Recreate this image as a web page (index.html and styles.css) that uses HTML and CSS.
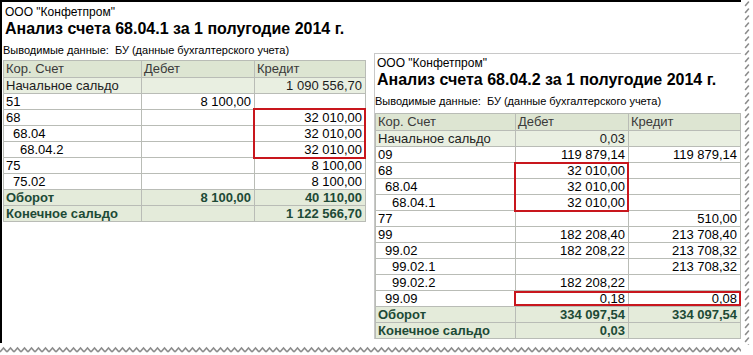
FILE: index.html
```html
<!DOCTYPE html>
<html lang="ru">
<head>
<meta charset="utf-8">
<title>Анализ счета</title>
<link rel="stylesheet" href="styles.css">
</head>
<body>
<div class="frame">
  <div class="sheet">
    <section class="report report-left">
      <div class="org">ООО "Конфетпром"</div>
      <h1 class="title">Анализ счета 68.04.1 за 1 полугодие 2014 г.</h1>
      <div class="meta">Выводимые данные:&nbsp; БУ (данные бухгалтерского учета)</div>
      <div class="table-wrap">
        <table class="grid grid-left">
          <colgroup><col class="c1"><col class="c2"><col class="c3"></colgroup>
          <tr class="head"><td>Кор. Счет</td><td>Дебет</td><td>Кредит</td></tr>
          <tr class="saldo"><td>Начальное сальдо</td><td></td><td class="num">1 090 556,70</td></tr>
          <tr><td>51</td><td class="num">8 100,00</td><td></td></tr>
          <tr><td>68</td><td></td><td class="num">32 010,00</td></tr>
          <tr><td class="l1">68.04</td><td></td><td class="num">32 010,00</td></tr>
          <tr><td class="l2">68.04.2</td><td></td><td class="num">32 010,00</td></tr>
          <tr><td>75</td><td></td><td class="num">8 100,00</td></tr>
          <tr><td class="l1">75.02</td><td></td><td class="num">8 100,00</td></tr>
          <tr class="total"><td>Оборот</td><td class="num">8 100,00</td><td class="num">40 110,00</td></tr>
          <tr class="total"><td>Конечное сальдо</td><td></td><td class="num">1 122 566,70</td></tr>
        </table>
        <div class="mark mark-l1"></div>
      </div>
    </section>
    <section class="report report-right">
      <div class="org">ООО "Конфетпром"</div>
      <h1 class="title">Анализ счета 68.04.2 за 1 полугодие 2014 г.</h1>
      <div class="meta">Выводимые данные:&nbsp; БУ (данные бухгалтерского учета)</div>
      <div class="table-wrap">
        <table class="grid grid-right">
          <colgroup><col class="c1"><col class="c2"><col class="c3"></colgroup>
          <tr class="head"><td>Кор. Счет</td><td>Дебет</td><td>Кредит</td></tr>
          <tr class="saldo"><td>Начальное сальдо</td><td class="num">0,03</td><td></td></tr>
          <tr><td>09</td><td class="num">119 879,14</td><td class="num">119 879,14</td></tr>
          <tr><td>68</td><td class="num">32 010,00</td><td></td></tr>
          <tr><td class="l1">68.04</td><td class="num">32 010,00</td><td></td></tr>
          <tr><td class="l2">68.04.1</td><td class="num">32 010,00</td><td></td></tr>
          <tr><td>77</td><td></td><td class="num">510,00</td></tr>
          <tr><td>99</td><td class="num">182 208,40</td><td class="num">213 708,40</td></tr>
          <tr><td class="l1">99.02</td><td class="num">182 208,22</td><td class="num">213 708,32</td></tr>
          <tr><td class="l2">99.02.1</td><td></td><td class="num">213 708,32</td></tr>
          <tr><td class="l2">99.02.2</td><td class="num">182 208,22</td><td></td></tr>
          <tr><td class="l1">99.09</td><td class="num">0,18</td><td class="num">0,08</td></tr>
          <tr class="total"><td>Оборот</td><td class="num">334 097,54</td><td class="num">334 097,54</td></tr>
          <tr class="total"><td>Конечное сальдо</td><td class="num">0,03</td><td></td></tr>
        </table>
        <div class="mark mark-r1"></div>
        <div class="mark mark-r2"></div>
      </div>
    </section>
  </div>
  <svg class="edge-right" width="12" height="355" viewBox="0 0 12 355" aria-hidden="true">
    <defs>
      <pattern id="dash" width="12" height="7" patternUnits="userSpaceOnUse">
        <path d="M4.5 5.5 L7.5 2" stroke="#8c8c8c" stroke-width="1.6" stroke-linecap="round" fill="none"/>
      </pattern>
    </defs>
    <rect x="0" y="0" width="12" height="345" fill="url(#dash)"/>
  </svg>
  <svg class="edge-bottom" width="741" height="12" viewBox="0 0 741 12" aria-hidden="true">
    <defs>
      <pattern id="zig" width="7" height="12" patternUnits="userSpaceOnUse">
        <path d="M0 9 L3.5 5 L7 9" stroke="#8c8c8c" stroke-width="1.6" fill="none"/>
      </pattern>
    </defs>
    <rect x="0" y="0" width="741" height="12" fill="url(#zig)"/>
  </svg>
</div>
</body>
</html>
```

FILE: styles.css
```css
* { box-sizing: border-box; }
html, body { margin: 0; padding: 0; background: #fff; }
body {
  font-family: "Liberation Sans", Arial, sans-serif;
  color: #000;
  width: 753px;
  height: 355px;
  overflow: hidden;
}
.frame {
  display: grid;
  grid-template-columns: 741px 12px;
  grid-template-rows: 343px 12px;
  width: 753px;
  height: 355px;
}
.sheet {
  grid-column: 1;
  grid-row: 1;
  border-left: 2px solid #000;
  border-top: 2px solid #000;
  display: flex;
  align-items: flex-start;
  overflow: hidden;
}
.edge-right {
  grid-column: 2;
  grid-row: 1 / span 2;
  display: block;
}
.edge-bottom {
  grid-column: 1;
  grid-row: 2;
  display: block;
}
.report { display: flex; flex-direction: column; }
.report-left { width: 370px; padding: 3px 0 0 1px; }
.report-right {
  margin-left: 2px;
  margin-top: 51px;
  width: 367px;
  border-left: 1px solid #c8c8c8;
  border-top: 1px solid #c8c8c8;
  padding: 2px 0 0 0;
  background: #fff;
}
.org {
  font-size: 12px;
  line-height: 14px;
  padding-left: 2px;
}
.title {
  margin: 0;
  font-size: 16px;
  line-height: 20px;
  font-weight: bold;
  padding-left: 2px;
}
.meta {
  font-size: 11px;
  line-height: 14px;
  margin-top: 4px;
}
.table-wrap { position: relative; margin-top: 5px; }
.report-left .table-wrap { margin-top: 3px; }
.grid {
  border-collapse: collapse;
  table-layout: fixed;
  font-size: 13px;
}
.grid-left { width: 362px; }
.grid-left .c1 { width: 138px; }
.grid-left .c2 { width: 113px; }
.grid-left .c3 { width: 111px; }
.grid-right { width: 365px; }
.grid-right .c1 { width: 140px; }
.grid-right .c2 { width: 113px; }
.grid-right .c3 { width: 112px; }
.grid td {
  border: 1px solid #b9bcb6;
  height: 16px;
  line-height: 14px;
  padding: 0 3px 0 2px;
  white-space: nowrap;
  overflow: hidden;
}
.grid .num { text-align: right; }
.grid .l1 { padding-left: 9px; }
.grid .l2 { padding-left: 16px; }
.grid .head td { background: #dde5d2; color: #3a3a3a; height: 17px; }
.grid .saldo td { background: #e9efe1; color: #1c1c1c; }
.grid .total td { background: #e4ebda; color: #1d4a36; font-weight: bold; }
.mark {
  position: absolute;
  border: 2px solid #c8161d;
}
.mark-l1 { left: 250px; top: 48px; width: 113px; height: 51px; }
.mark-r1 { left: 139px; top: 49px; width: 115px; height: 50px; }
.mark-r2 { left: 139px; top: 178px; width: 227px; height: 15px; }
```
